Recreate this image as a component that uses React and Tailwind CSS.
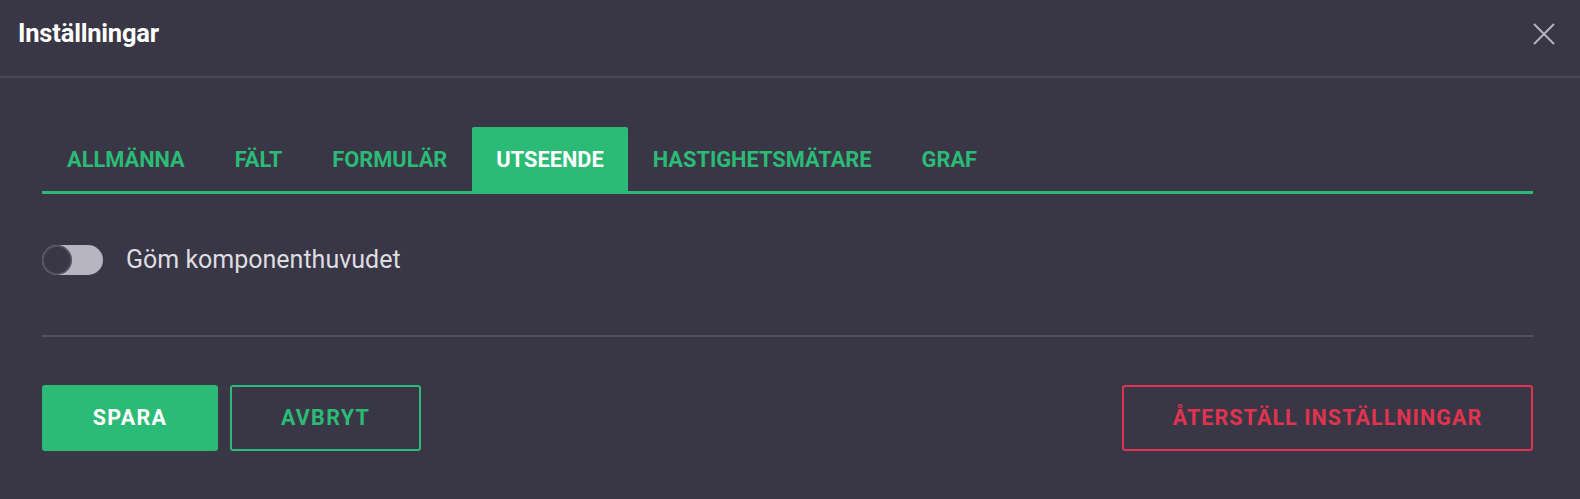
import { useState } from 'react';

const tabs = ['ALLMÄNNA', 'FÄLT', 'FORMULÄR', 'UTSEENDE', 'HASTIGHETSMÄTARE', 'GRAF'];

export default function App() {
  const [active, setActive] = useState('UTSEENDE');
  const [hideHeader, setHideHeader] = useState(false);

  return (
    <div className="min-h-[499px] w-full bg-[#393745] font-['Roboto','Liberation_Sans',sans-serif] text-white">
      {/* header */}
      <div className="flex h-[78px] items-center justify-between border-b-2 border-[#4a4858] pb-[8px] pl-[18px] pr-[25px]">
        <h1 className="text-[25.5px] font-bold leading-none tracking-[-0.2px]">Inställningar</h1>
        <button className="text-[#b4b2bc]" aria-label="Stäng">
          <svg width="22" height="22" viewBox="0 0 22 22" fill="none" stroke="currentColor" strokeWidth="2">
            <path d="M1 1L21 21M21 1L1 21" />
          </svg>
        </button>
      </div>

      <div className="pl-[42px] pr-[47px]">
        {/* tabs */}
        <div className="mt-[49px] flex border-b-[3px] border-[#2bbb76]">
          {tabs.map((t) => (
            <button
              key={t}
              onClick={() => setActive(t)}
              className={
                t === active
                  ? 'flex h-[64px] items-center rounded-t-[2px] bg-[#2bbb76] px-[24px] pt-[2px] text-[21.8px] font-bold text-white'
                  : 'flex h-[64px] items-center px-[25px] pt-[2px] text-[21.8px] font-bold text-[#2bbb76]'
              }
            >
              {t}
            </button>
          ))}
        </div>

        {/* toggle */}
        <div className="mt-[51px] flex h-[30px] items-center gap-[23px]">
          <button
            onClick={() => setHideHeader(!hideHeader)}
            className={
              hideHeader
                ? 'flex h-[30px] w-[61px] justify-end rounded-full bg-[#2bbb76]'
                : 'flex h-[30px] w-[61px] justify-start rounded-full bg-[#b8b5c2]'
            }
          >
            <span className="h-[30px] w-[30px] rounded-full border-2 border-[#67657380] bg-[#393745]" />
          </button>
          <span className="text-[25px] text-[#dedde2]">Göm komponenthuvudet</span>
        </div>

        <div className="mt-[60px] h-[2px] bg-[#524f61]" />

        {/* actions */}
        <div className="mt-[48px] flex items-center justify-between">
          <div className="flex gap-[12px]">
            <button className="h-[66px] w-[176px] rounded-[3px] bg-[#2bbb76] text-[21.5px] font-bold tracking-[0.06em] text-white">
              SPARA
            </button>
            <button className="h-[66px] w-[191px] rounded-[3px] border-2 border-[#2bbb76] text-[21.5px] font-bold tracking-[0.06em] text-[#2bbb76]">
              AVBRYT
            </button>
          </div>
          <button className="h-[66px] w-[411px] rounded-[3px] border-2 border-[#e0334f] text-[21.5px] font-bold tracking-[0.05em] text-[#e0334f]">
            ÅTERSTÄLL INSTÄLLNINGAR
          </button>
        </div>
      </div>
    </div>
  );
}
